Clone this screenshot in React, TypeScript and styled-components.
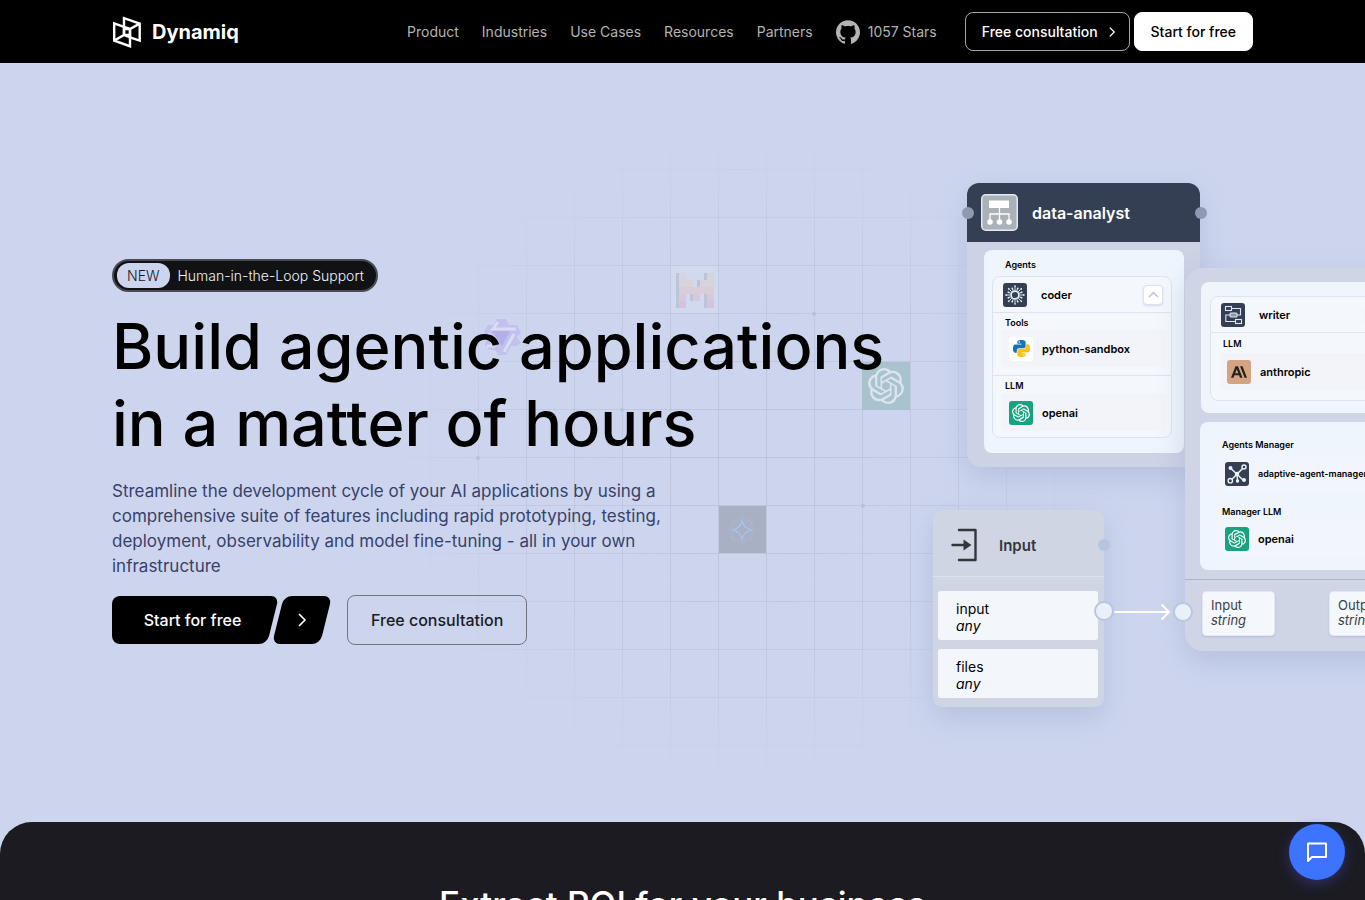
import React from "react";
import styled, { createGlobalStyle } from "styled-components";
import { SiOpenai, SiAnthropic, SiGithub } from "react-icons/si";

const GlobalStyle = createGlobalStyle`
  *, *::before, *::after { box-sizing: border-box; }
  body { margin: 0; background: #cdd5ee; font-family: Inter, "Liberation Sans", sans-serif; color: #000; }
  button { font-family: inherit; cursor: pointer; }
  h1, h2, h3, p { margin: 0; }
`;

const Page = styled.div`
  min-height: 100vh;
  display: flex;
  flex-direction: column;
  overflow: hidden;
`;

/* ---------- header ---------- */

const Header = styled.header`
  background: #000;
  padding: 0 24px;
`;

const HeaderInner = styled.div`
  max-width: 1141px;
  height: 63px;
  margin: 0 auto;
  display: flex;
  align-items: center;
  justify-content: space-between;
`;

const Brand = styled.a`
  display: flex;
  align-items: center;
  gap: 10px;
  color: #fff;
  font-size: 20px;
  font-weight: 700;
  text-decoration: none;
`;

const HeaderRight = styled.div`
  display: flex;
  align-items: center;
  gap: 28px;
`;

const Nav = styled.nav`
  display: flex;
  align-items: center;
  gap: 23px;
`;

const NavLink = styled.a`
  display: flex;
  align-items: center;
  gap: 8px;
  color: #b3b3b3;
  font-size: 14px;
  line-height: 24px;
  text-decoration: none;
`;

const HeaderActions = styled.div`
  display: flex;
  gap: 4px;
`;

const HeaderButton = styled.button<{ $solid?: boolean }>`
  display: flex;
  align-items: center;
  gap: 8px;
  height: 39px;
  padding: 0 ${(p) => (p.$solid ? 16 : 11)}px 0 16px;
  border: 1px solid ${(p) => (p.$solid ? "#fff" : "#a6a6a6")};
  border-radius: 8px;
  background: ${(p) => (p.$solid ? "#fff" : "#000")};
  color: ${(p) => (p.$solid ? "#000" : "#fff")};
  font-size: 14px;
  font-weight: 500;
  white-space: nowrap;
`;

/* ---------- hero ---------- */

const Hero = styled.main`
  position: relative;
  padding: 0 24px;
`;

const HeroInner = styled.div`
  position: relative;
  max-width: 1141px;
  margin: 0 auto;
  padding: 119px 0 100px;
  display: flex;
  align-items: flex-start;
`;

const Backdrop = styled.svg`
  position: absolute;
  left: 270px;
  top: 58px;
  width: 720px;
  height: 672px;
`;

const Copy = styled.section`
  position: relative;
  flex: 0 0 816px;
  padding-top: 77px;
  display: flex;
  flex-direction: column;
  align-items: flex-start;
`;

const Badge = styled.a`
  display: flex;
  align-items: center;
  gap: 8px;
  height: 33px;
  padding: 0 12px 0 3px;
  border: 2px solid #484b55;
  border-radius: 17px;
  background: #101213;
  color: #f2f3f7;
  font-size: 14px;
  font-weight: 300;
  text-decoration: none;
`;

const BadgeTag = styled.span`
  padding: 0 10px;
  border-radius: 12px;
  background: #cdd5ee;
  color: #16181d;
  line-height: 25px;
`;

const Title = styled.h1`
  margin-top: 16px;
  font-size: 63px;
  font-weight: 500;
  line-height: 77px;
  white-space: nowrap;
`;

const Lead = styled.p`
  margin-top: 17px;
  max-width: 580px;
  color: #37416a;
  font-size: 17px;
  line-height: 25px;
`;

const Actions = styled.div`
  margin-top: 16px;
  display: flex;
  align-items: center;
`;

const StartButton = styled.button`
  position: relative;
  z-index: 0;
  width: 161px;
  height: 48px;
  padding: 0;
  border: 0;
  background: none;
  color: #fff;
  font-size: 16px;
  font-weight: 500;

  &::before, &::after {
    content: "";
    position: absolute;
    z-index: -1;
    top: 0;
    bottom: 0;
    border-radius: 8px;
    background: #000;
  }
  &::before { left: 0; right: 20px; }
  &::after { left: 40px; right: 0; transform: skewX(-14deg); }
`;

const ArrowButton = styled.button`
  width: 48px;
  height: 48px;
  margin: 0 21px 0 5px;
  padding: 0;
  border: 0;
  border-radius: 8px;
  background: #000;
  color: #fff;
  transform: skewX(-14deg);

  svg { display: block; margin: 0 auto; transform: skewX(14deg); }
`;

const OutlineButton = styled.button`
  height: 50px;
  padding: 0 23px;
  border: 1px solid #74767f;
  border-radius: 8px;
  background: transparent;
  color: #1b1b21;
  font-size: 16px;
  font-weight: 500;
`;

/* ---------- workflow diagram ---------- */

const Canvas = styled.div`
  position: relative;
  flex: 1 0 0;
  height: 540px;
`;

const Node = styled.article<{ $x: number; $y: number; $w: number; $h: number; $bg: string; $r: number }>`
  position: absolute;
  left: ${(p) => p.$x}px;
  top: ${(p) => p.$y}px;
  width: ${(p) => p.$w}px;
  height: ${(p) => p.$h}px;
  border-radius: ${(p) => p.$r}px;
  background: ${(p) => p.$bg};
  box-shadow: 0 10px 28px rgba(120, 140, 180, 0.28);
`;

const AgentHeader = styled.header`
  display: flex;
  align-items: center;
  gap: 14px;
  height: 59px;
  padding-left: 14px;
  border-radius: 12px 12px 0 0;
  background: #343f54;
  color: #fff;
  font-size: 16px;
  font-weight: 600;
`;

const Panel = styled.div<{ $top: number; $left: number; $h: number; $pad: string }>`
  height: ${(p) => p.$h}px;
  margin: ${(p) => p.$top}px 16px 0 ${(p) => p.$left}px;
  padding: ${(p) => p.$pad};
  border-radius: 8px;
  background: #eef5fd;
`;

const Group = styled.div`
  border: 1px solid #dbe4f0;
  border-radius: 8px;
  background: #f4f7fc;
  overflow: hidden;
`;

const Label = styled.h3<{ $h: number; $pad: number }>`
  height: ${(p) => p.$h}px;
  padding: 1px 0 0 ${(p) => p.$pad}px;
  font-size: 9px;
  font-weight: 600;
  line-height: ${(p) => p.$h}px;
`;

const HeadRow = styled.div`
  display: flex;
  align-items: center;
  gap: 14px;
  height: 36px;
  padding: 0 8px 0 10px;
  border-bottom: 1px solid #dbe4f0;
  font-size: 11px;
  font-weight: 600;
`;

const ToolRow = styled.div<{ $tint?: string; $size?: number; $end?: number }>`
  display: flex;
  align-items: center;
  gap: 9px;
  height: 37px;
  margin: 0 5px ${(p) => p.$end ?? 0}px 9px;
  padding-left: 7px;
  background: ${(p) => p.$tint ?? "#f3f4f9"};
  font-size: ${(p) => p.$size ?? 11}px;
  font-weight: 600;
  white-space: nowrap;
`;

const Rule = styled.hr`
  margin: 0;
  border: 0;
  border-top: 1px solid #dbe4f0;
`;

const Tile = styled.span<{ $bg: string }>`
  flex: none;
  display: grid;
  place-items: center;
  width: 24px;
  height: 24px;
  border-radius: 3px;
  background: ${(p) => p.$bg};
  color: #fff;
`;

const Collapse = styled.button`
  display: grid;
  place-items: center;
  width: 20px;
  height: 20px;
  margin-left: auto;
  padding: 0;
  border: 1px solid #dde2ee;
  border-radius: 4px;
  background: #fff;
  box-shadow: 0 1px 2px rgba(120, 140, 190, 0.25);
`;

const Ports = styled.div`
  display: flex;
  justify-content: space-between;
  height: 72px;
  margin-top: 9px;
  padding: 11px 18px 0 17px;
  border-top: 1px solid #abb3c6;
`;

const Port = styled.div`
  width: 73px;
  height: 45px;
  padding: 6px 8px;
  border: 1px solid #e3e8f2;
  border-radius: 4px;
  background: #f4f7fc;
  box-shadow: 0 1px 2px rgba(120, 140, 190, 0.3);
  color: #3a3d44;
  font-size: 13px;
  line-height: 15px;

  em { display: block; }
`;

const InputHeader = styled.header`
  display: flex;
  align-items: center;
  gap: 21px;
  height: 67px;
  padding: 4px 0 0 17px;
  border-bottom: 1px solid #dce2ec;
  color: #33373c;
  font-size: 15px;
  font-weight: 600;
`;

const Field = styled.div<{ $top: number }>`
  height: 49px;
  margin: ${(p) => p.$top}px 6px 0 5px;
  padding: 9px 18px;
  border-radius: 3px;
  background: #f3f7fc;
  font-size: 14px;
  line-height: 17px;

  em { display: block; }
`;

const Handle = styled.span<{ $x: number; $y: number; $d: number; $fill: string; $ring?: boolean }>`
  position: absolute;
  left: ${(p) => p.$x - p.$d / 2}px;
  top: ${(p) => p.$y - p.$d / 2}px;
  width: ${(p) => p.$d}px;
  height: ${(p) => p.$d}px;
  border: ${(p) => (p.$ring ? "2px solid #b8c6e2" : "0")};
  border-radius: 50%;
  background: ${(p) => p.$fill};
`;

const Wire = styled.svg`
  position: absolute;
  left: 186px;
  top: 420px;
`;

/* ---------- next section ---------- */

const NextSection = styled.section`
  flex: 1 0 78px;
  height: 78px;
  border-radius: 32px 32px 0 0;
  background: #1b1b21;
  overflow: hidden;
`;

const NextTitle = styled.h2`
  padding-top: 56px;
  color: #fff;
  font-size: 35px;
  font-weight: 500;
  line-height: 52px;
  text-align: center;
`;

const ChatButton = styled.button`
  position: fixed;
  right: 20px;
  bottom: 20px;
  display: grid;
  place-items: center;
  width: 56px;
  height: 56px;
  padding: 0;
  border: 0;
  border-radius: 50%;
  background: #3c74ff;
  box-shadow: 0 4px 14px rgba(76, 70, 200, 0.45);
`;

/* ---------- drawings ---------- */

const LogoMark = () => (
  <svg width="30" height="32" viewBox="0 0 30 32" fill="none" stroke="#fff" strokeWidth="2.4" aria-hidden="true">
    <path d="M12 19V2.200L27.700 7.600V24.600L18 21.300" />
    <path d="M12 10.800 2.200 7.400V24.600L18 30.200V13" />
    <path d="M2.200 24.600 12 19H18M12 19V13H18L27.700 7.600M12 10.800V13M18 13V21.300M12 10.800 18 13M12 19 18 21.300" />
  </svg>
);

const Chevron = ({ size = 16 }: { size?: number }) => (
  <svg width={size} height={size} viewBox="0 0 16 16" fill="none" stroke="currentColor" strokeWidth="1.7" strokeLinecap="round" strokeLinejoin="round" aria-hidden="true">
    <path d="M5.500 2.500 11 8 5.500 13.500" />
  </svg>
);

const ChevronUp = () => (
  <svg width="11" height="7" viewBox="0 0 11 7" fill="none" stroke="#b9c2e4" strokeWidth="1.5" aria-hidden="true">
    <path d="M1 6 5.500 1.500 10 6" />
  </svg>
);

const HierarchyIcon = () => (
  <svg width="37" height="37" viewBox="0 0 37 37" aria-hidden="true">
    <rect x="0.75" y="0.75" width="35.500" height="35.500" rx="4" fill="#a9b1b9" stroke="#e3e9ee" strokeWidth="1.5" />
    <rect x="8" y="6.500" width="20" height="7.500" fill="#fff" />
    <path d="M18.500 14v14M9 27v-7h19v7" fill="none" stroke="#fff" strokeWidth="1.3" />
    <circle cx="9" cy="28" r="2.800" fill="#fff" />
    <circle cx="18.500" cy="28" r="2.800" fill="#fff" />
    <circle cx="28" cy="28" r="2.800" fill="#fff" />
  </svg>
);

const CoderIcon = () => (
  <svg width="22" height="22" viewBox="-11 -11 22 22" fill="none" stroke="#e6f0f4" aria-hidden="true">
    <circle r="3.900" strokeWidth="1.6" />
    {Array.from({ length: 16 }, (_, i) => (
      <g key={i} transform={`rotate(${i * 22.5})`}>
        <path d={i % 2 ? "M0-4.600V-6.600" : "M0-4.600V-8"} strokeWidth="0.9" />
        <circle cy={i % 2 ? -7.2 : -8.8} r="0.9" fill="#e6f0f4" stroke="none" />
      </g>
    ))}
  </svg>
);

const WriterIcon = () => (
  <svg width="22" height="22" viewBox="0 0 22 22" fill="none" stroke="#dfe7ee" strokeWidth="1.1" aria-hidden="true">
    <rect x="3.500" y="2.500" width="6" height="4" />
    <rect x="8" y="9" width="7" height="4" rx="1" fill="#8b98a8" />
    <rect x="13.500" y="15.500" width="6" height="4" />
    <path d="M9.500 4.500H18.500V11H15M8 11H3.800v6.500h9.700" />
  </svg>
);

const ManagerIcon = () => (
  <svg width="24" height="24" viewBox="0 0 24 24" fill="none" stroke="#eef3f8" strokeWidth="1.4" aria-hidden="true">
    <path d="M7 17.200 17.800 6.200M6 6.500 18 18M12 12l1.500-2M12 12l.5 6.500" />
    <circle cx="19" cy="5" r="2" />
    <circle cx="5.300" cy="18.700" r="2.200" />
    <circle cx="5.500" cy="6" r="1.300" fill="#eef3f8" />
    <circle cx="19" cy="18" r="1.300" fill="#eef3f8" />
    <circle cx="12.500" cy="19" r="1" fill="#eef3f8" />
    <circle cx="12" cy="12" r="1.500" fill="#eef3f8" />
  </svg>
);

const snake =
  "M14.25.18l.9.2.73.26.59.3.45.32.34.34.25.34.16.33.1.3.04.26.02.2-.01.13V8.5l-.05.63-.13.55-.21.46-.26.38-.3.31-.33.25-.35.19-.35.14-.33.1-.3.07-.26.04-.21.02H8.77l-.69.05-.59.14-.5.22-.41.27-.33.32-.27.35-.2.36-.15.37-.1.35-.07.32-.04.27-.02.21v3.06H3.17l-.21-.03-.28-.07-.32-.12-.35-.18-.36-.26-.36-.36-.35-.46-.32-.59-.28-.73-.21-.88-.14-1.05-.05-1.23.06-1.22.16-1.04.24-.87.32-.71.36-.57.4-.44.42-.33.42-.24.4-.16.36-.1.32-.05.24-.01h.16l.06.01h8.16v-.83H6.18l-.01-2.75-.02-.37.05-.34.11-.31.17-.28.25-.26.31-.23.38-.2.44-.18.51-.15.58-.12.64-.1.71-.06.77-.04.84-.02 1.27.05zm-6.3 1.98l-.23.33-.08.41.08.41.23.34.33.22.41.09.41-.09.33-.22.23-.34.08-.41-.08-.41-.23-.33-.33-.22-.41-.09-.41.09z";

const PythonIcon = () => (
  <svg width="17" height="17" viewBox="0 0 24 24" aria-hidden="true">
    <path d={snake} fill="#1273b8" />
    <path d={snake} fill="#fcc015" transform="rotate(180 12 12)" />
  </svg>
);

const EnterIcon = () => (
  <svg width="28" height="34" viewBox="0 0 28 34" fill="none" stroke="#33373c" strokeWidth="2.4" aria-hidden="true">
    <path d="M9 2h16.500v30H9" strokeLinejoin="round" strokeLinecap="round" />
    <path d="M2.500 17H14" strokeLinecap="round" />
    <path d="M13.500 11.500 21.500 17l-8 5.500z" fill="#33373c" stroke="none" />
  </svg>
);

const mRows = ["a...a", "aa.aa", "aaaaa", "a.a.a", "a...a"];
const mColors = ["#d5d5dc", "#d8d2da", "#dacdda", "#d9c8da", "#d8c1da"];

const GridBackdrop = () => (
  <Backdrop viewBox="382 121 720 672" aria-hidden="true">
    <defs>
      <pattern id="cells" x="382" y="121" width="48" height="48" patternUnits="userSpaceOnUse">
        <path d="M0 .5H48M.5 0V48" stroke="#8c97a8" strokeOpacity="0.24" />
      </pattern>
      <radialGradient id="fade">
        <stop offset="0" stopColor="#fff" />
        <stop offset="0.6" stopColor="#fff" stopOpacity="0.75" />
        <stop offset="1" stopColor="#fff" stopOpacity="0" />
      </radialGradient>
      <mask id="fadeMask">
        <ellipse cx="742" cy="457" rx="360" ry="336" fill="url(#fade)" />
      </mask>
    </defs>
    <rect x="382" y="121" width="720" height="672" fill="url(#cells)" mask="url(#fadeMask)" />
    <g fill="#b8c0d5">
      <circle cx="814" cy="314" r="2" />
      <circle cx="622" cy="410" r="2" />
      <circle cx="478" cy="458" r="2" />
      <circle cx="863" cy="506" r="2" />
    </g>
    <rect x="671" y="266" width="47" height="47" fill="#d1d9ef" />
    {mRows.map((row, r) =>
      row.split("").map((c, i) =>
        c === "a" ? (
          <g key={`${r}-${i}`}>
            {(i === 0 || row[i - 1] === ".") && <rect x={676 + i * 7} y={273 + r * 7} width="4" height="7" fill="#bcc4da" />}
            <rect x={679 + i * 7} y={273 + r * 7} width="7" height="7" fill={mColors[r]} />
          </g>
        ) : null
      )
    )}
    <g transform="translate(502 337)">
      <path d="M-5-18H4L7-12 15-12 19-4 15 0 19 6 15 9 9 9 4 18-4 18-7 13-13 13-17 7-14 1-18-5-14-12-8-12z" fill="#c2c1ed" />
      <path d="M-10-6H8L0 9z" fill="#b4aee9" />
      <path d="M-4-15-9-8H14M-15 9-9 9-12 1-13-4M2 15 12-3" fill="none" stroke="#d8dcf4" strokeWidth="3" />
    </g>
    <rect x="862" y="362" width="48" height="48" fill="#a9c3ce" />
    <g color="#dbe4f0">
      <SiOpenai x="868" y="368" size={36} />
    </g>
    <rect x="719" y="506" width="47" height="47" fill="#a8b0c4" />
    <g fill="none" stroke="#b0bad1" strokeWidth="0.6">
      <circle cx="742" cy="530" r="12" />
      <path d="M726 530h32M742 514v32M733 519v22M751 519v22M731 521h22M731 539h22" />
    </g>
    <path d="M742 521q2 7 9 9-7 2-9 9-2-7-9-9 7-2 9-9z" fill="#a8b0c4" stroke="#a9c3ee" strokeWidth="1.2" />
  </Backdrop>
);

const navItems = ["Product", "Industries", "Use Cases", "Resources", "Partners"];

const nodeDark = "#343f54";
const openaiGreen = "#17a37f";

export default function App() {
  return (
    <Page>
      <GlobalStyle />
      <Header>
        <HeaderInner>
          <Brand href="#">
            <LogoMark />
            Dynamiq
          </Brand>
          <HeaderRight>
            <Nav>
              {navItems.map((item) => (
                <NavLink key={item} href="#">{item}</NavLink>
              ))}
              <NavLink href="#">
                <SiGithub size={24} />
                1057 Stars
              </NavLink>
            </Nav>
            <HeaderActions>
              <HeaderButton>
                Free consultation
                <Chevron size={12} />
              </HeaderButton>
              <HeaderButton $solid>Start for free</HeaderButton>
            </HeaderActions>
          </HeaderRight>
        </HeaderInner>
      </Header>

      <Hero>
        <HeroInner>
          <GridBackdrop />
          <Copy>
            <Badge href="#">
              <BadgeTag>NEW</BadgeTag>
              Human-in-the-Loop Support
            </Badge>
            <Title>
              Build agentic applications
              <br />
              in a matter of hours
            </Title>
            <Lead>
              Streamline the development cycle of your AI applications by using a comprehensive suite of
              features including rapid prototyping, testing, deployment, observability and model
              fine-tuning - all in your own infrastructure
            </Lead>
            <Actions>
              <StartButton>Start for free</StartButton>
              <ArrowButton aria-label="Start for free">
                <Chevron />
              </ArrowButton>
              <OutlineButton>Free consultation</OutlineButton>
            </Actions>
          </Copy>

          <Canvas>
            <Node $x={39} $y={1} $w={233} $h={284} $bg="#cdd2e5" $r={14}>
              <AgentHeader>
                <HierarchyIcon />
                data-analyst
              </AgentHeader>
              <Panel $top={8} $left={17} $h={203} $pad="1px 12px 0 8px">
                <Label $h={25} $pad={13}>Agents</Label>
                <Group>
                  <HeadRow>
                    <Tile $bg={nodeDark}><CoderIcon /></Tile>
                    coder
                    <Collapse aria-label="Collapse coder"><ChevronUp /></Collapse>
                  </HeadRow>
                  <Label $h={17} $pad={12}>Tools</Label>
                  <ToolRow $end={8}>
                    <Tile $bg="#fff"><PythonIcon /></Tile>
                    python-sandbox
                  </ToolRow>
                  <Rule />
                  <Label $h={18} $pad={12}>LLM</Label>
                  <ToolRow $end={6}>
                    <Tile $bg={openaiGreen}><SiOpenai size={18} /></Tile>
                    openai
                  </ToolRow>
                </Group>
              </Panel>
            </Node>
            <Handle $x={40} $y={31} $d={12} $fill="#8f9ab2" />
            <Handle $x={273} $y={31} $d={12} $fill="#8f9ab2" />

            <Node $x={257} $y={86} $w={235} $h={383} $bg="rgba(208, 213, 229, 0.94)" $r={18}>
              <Panel $top={14} $left={16} $h={131} $pad="14px 9px 0">
                <Group>
                  <HeadRow>
                    <Tile $bg={nodeDark}><WriterIcon /></Tile>
                    writer
                    <Collapse aria-label="Collapse writer"><ChevronUp /></Collapse>
                  </HeadRow>
                  <Label $h={20} $pad={12}>LLM</Label>
                  <ToolRow $end={10}>
                    <Tile $bg="#d4a381">
                      <SiAnthropic size={16} color="#22221f" />
                    </Tile>
                    anthropic
                  </ToolRow>
                </Group>
              </Panel>
              <Panel $top={9} $left={15} $h={148} $pad="11px 9px 0">
                <Label $h={22} $pad={13}>Agents Manager</Label>
                <ToolRow $tint="#f2f6fc" $size={9} $end={10}>
                  <Tile $bg={nodeDark}><ManagerIcon /></Tile>
                  adaptive-agent-manager
                </ToolRow>
                <Label $h={18} $pad={13}>Manager LLM</Label>
                <ToolRow $tint="#f2f6fc">
                  <Tile $bg={openaiGreen}><SiOpenai size={18} /></Tile>
                  openai
                </ToolRow>
              </Panel>
              <Ports>
                <Port>Input<em>string</em></Port>
                <Port>Output<em>string</em></Port>
              </Ports>
            </Node>

            <Node $x={5} $y={328} $w={171} $h={197} $bg="#d0d5e4" $r={9}>
              <InputHeader>
                <EnterIcon />
                Input
              </InputHeader>
              <Field $top={14}>input<em>any</em></Field>
              <Field $top={9}>files<em>any</em></Field>
            </Node>
            <Handle $x={176} $y={363} $d={12} $fill="#b5c5e0" />
            <Wire width="60" height="20" viewBox="0 0 60 20" fill="none" stroke="#fff" strokeWidth="2" strokeLinecap="round" aria-hidden="true">
              <path d="M1 10H55M48 3l7 7-7 7" />
            </Wire>
            <Handle $x={176} $y={429} $d={20} $fill="#eaf0f7" $ring />
            <Handle $x={255} $y={430} $d={20} $fill="#eaf0f7" $ring />
          </Canvas>
        </HeroInner>
      </Hero>

      <NextSection>
        <NextTitle>Extract ROI for your business</NextTitle>
      </NextSection>

      <ChatButton aria-label="Open chat">
        <svg width="24" height="24" viewBox="0 0 24 24" fill="none" stroke="#fff" strokeWidth="2" strokeLinejoin="round" aria-hidden="true">
          <path d="M3 3.500h18v13.500H7l-4 4z" />
        </svg>
      </ChatButton>
    </Page>
  );
}
